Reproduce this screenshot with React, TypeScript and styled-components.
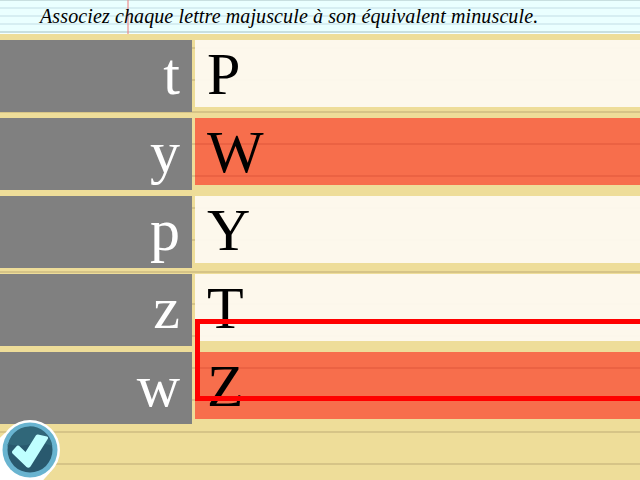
import React from "react";
import styled, { createGlobalStyle } from "styled-components";

const GlobalStyle = createGlobalStyle`
  * { box-sizing: border-box; }
  body { margin: 0; overflow: hidden; }
`;

const Page = styled.main`
  position: relative;
  width: 640px;
  height: 480px;
  overflow: hidden;
  font-family: "Liberation Serif", "Times New Roman", serif;
  background: repeating-linear-gradient(#eedd99 0 15px, #d6c487 15px 17px, #eedd99 17px 32px);
`;

const Header = styled.header`
  height: 34px;
  padding-left: 40px;
  font-size: 20px;
  font-style: italic;
  letter-spacing: 0.115px;
  line-height: 33px;
  white-space: nowrap;
  color: #000;
  background:
    linear-gradient(90deg, transparent 127px, rgba(240, 130, 130, 0.55) 127px 129px, transparent 129px),
    linear-gradient(#c8dfe0 1px, #eaffff 1px 7px, #d6eef2 7px 9px, #eaffff 9px 15px, #d6eef2 15px 17px,
      #eaffff 17px 23px, #d6eef2 23px 25px, #eaffff 25px 31px, #c8dfe0 31px 33px, #f4ffff 33px);
`;

const Title = styled.span`
  display: inline-block;
`;

const Board = styled.div`
  display: flex;
  flex-direction: column;
  gap: 6px;
  padding-top: 6px;
`;

const Row = styled.div`
  display: grid;
  grid-template-columns: 192px 1fr;
  column-gap: 3px;
  align-items: start;
  height: 72px;
  font-size: 60px;
  line-height: 68px;
`;

const Target = styled.div`
  height: 72px;
  padding-right: 12px;
  text-align: right;
  color: #fff;
  background: #808080;
`;

const Choice = styled.div<{ $wrong: boolean }>`
  height: 67px;
  padding-left: 12px;
  color: #000;
  background: ${(p) => (p.$wrong ? "rgba(255, 0, 0, 0.5)" : "rgba(254, 250, 241, 0.94)")};
`;

const Selection = styled.div`
  position: absolute;
  left: 195px;
  top: 319px;
  width: 460px;
  height: 82px;
  border: 5px solid #f00;
`;

const ValidateButton = styled.button`
  position: absolute;
  left: 0;
  top: 420px;
  width: 60px;
  height: 60px;
  padding: 0;
  border: 0;
  background: none;
  svg { display: block; }
`;

const rows = [
  { target: "t", choice: "P", wrong: false },
  { target: "y", choice: "W", wrong: true },
  { target: "p", choice: "Y", wrong: false },
  { target: "z", choice: "T", wrong: false },
  { target: "w", choice: "Z", wrong: true },
];

export default function App() {
  return (
    <Page>
      <GlobalStyle />
      <Header>
        <Title>Associez chaque lettre majuscule à son équivalent minuscule.</Title>
      </Header>
      <Board>
        {rows.map((r) => (
          <Row key={r.target}>
            <Target>{r.target}</Target>
            <Choice $wrong={r.wrong}>{r.choice}</Choice>
          </Row>
        ))}
      </Board>
      <Selection />
      <ValidateButton aria-label="Valider">
        <svg width="60" height="60" viewBox="0 0 60 60">
          <path d="M0 17.700L5 13L30 30L50 52.500L43.300 60H0Z" fill="#fff" />
          <circle cx="30" cy="30" r="30" fill="#fff" />
          <circle cx="30" cy="30" r="27.500" fill="#69b4d0" />
          <circle cx="30" cy="30" r="22.500" fill="#29596e" />
          <path d="M7.500 28A22.500 22.500 0 0 1 52.300 26Q39 21 33 23Q22 28 7.500 24Z" fill="#306779" />
          <path d="M12.300 31L17 25.800Q18 25 19 25.800L25.500 32L36 15.300Q36.800 14.300 38 14.500L47 16.500Q48.500 17 48 18.500L30.500 46.500Q28.500 48.800 26.500 47L12.500 33.500Q11.400 32.200 12.300 31Z" fill="#bfffff" />
        </svg>
      </ValidateButton>
    </Page>
  );
}
